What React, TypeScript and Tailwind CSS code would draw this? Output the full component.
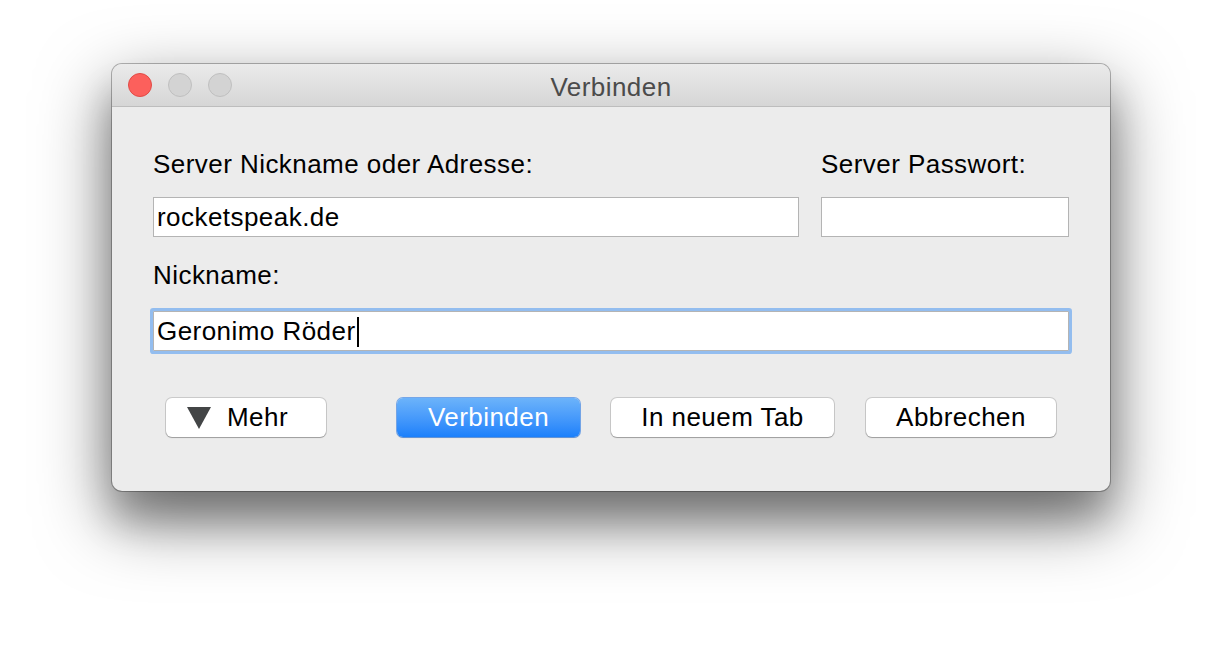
import React from 'react';

function TrafficLight({ color }: { color: 'red' | 'gray' }) {
  return (
    <div
      className={
        color === 'red'
          ? 'w-[24px] h-[24px] rounded-full bg-[#fc605c] border border-[#e04b46]'
          : 'w-[24px] h-[24px] rounded-full bg-[#d3d3d3] border border-[#bfbfbf]'
      }
    />
  );
}

function PlainButton({ children, className }: { children: React.ReactNode; className: string }) {
  return (
    <button
      className={`h-[39px] flex items-center justify-center pb-[2px] rounded-[6px] bg-white text-black leading-[32px] shadow-[0_0_0_1px_rgba(0,0,0,0.14),0_1px_1px_rgba(0,0,0,0.22)] ${className}`}
    >
      {children}
    </button>
  );
}

export default function App() {
  return (
    <div
      className="w-[1222px] h-[652px] bg-white overflow-hidden pt-[64px] pl-[112px] text-[26px] tracking-[0.45px]"
      style={{ fontFamily: '"Liberation Sans", Arial, sans-serif' }}
    >
      {/* Window */}
      <div className="w-[998px] h-[427px] rounded-[10px] bg-[#ececec] flex flex-col overflow-hidden shadow-[0_0_0_1px_rgba(0,0,0,0.28),0_26px_70px_2px_rgba(0,0,0,0.5),0_30px_36px_rgba(0,0,0,0.22)]">
        {/* Title bar */}
        <div className="relative h-[43px] flex items-center bg-gradient-to-b from-[#ebebeb] to-[#d6d6d6] border-b border-[#bdbdbd]">
          <div className="flex items-center gap-[16px] pl-[16px]">
            <TrafficLight color="red" />
            <TrafficLight color="gray" />
            <TrafficLight color="gray" />
          </div>
          <div className="absolute inset-0 flex items-center justify-center leading-[32px] text-[#4b4b4b] pt-[3px]">
            Verbinden
          </div>
        </div>

        {/* Content */}
        <div className="flex flex-col px-[41px] pt-[41px]">
          <div className="flex gap-[22px]">
            <div className="w-[646px] flex flex-col">
              <div className="leading-[32px] text-black">Server Nickname oder Adresse:</div>
              <div className="mt-[17px] h-[40px] bg-white border border-[#b4b4b4] pl-[3px] pt-[3px] leading-[32px] text-black">
                rocketspeak.de
              </div>
            </div>
            <div className="w-[248px] flex flex-col">
              <div className="leading-[32px] text-black">Server Passwort:</div>
              <div className="mt-[17px] h-[40px] bg-white border border-[#b4b4b4]" />
            </div>
          </div>

          <div className="mt-[22px] leading-[32px] text-black">Nickname:</div>
          <div className="mt-[20px] h-[40px] bg-white border border-[#b4b4b4] pl-[3px] pt-[3px] leading-[32px] text-black flex items-start rounded-[1px] shadow-[0_0_0_3px_#93bdef]">
            <span>Geronimo Röder</span>
            <span className="w-[2px] h-[30px] bg-black mt-[2px] ml-[1px]" />
          </div>

          {/* Buttons */}
          <div className="mt-[47px] flex pl-[13px]">
            <PlainButton className="w-[160px] justify-start pl-[21px] gap-[16px]">
              <svg width="24" height="22" viewBox="0 0 24 22" className="mt-[2px]">
                <path d="M0 0 H24 L12 22 Z" fill="#434546" />
              </svg>
              <span>Mehr</span>
            </PlainButton>
            <button className="ml-[71px] w-[183px] h-[39px] pb-[2px] rounded-[6px] bg-gradient-to-b from-[#6cb3fa] to-[#1a80fb] text-white leading-[32px] flex items-center justify-center shadow-[0_0_0_1px_rgba(20,110,230,0.55),0_1px_1px_rgba(0,0,0,0.2)]">
              Verbinden
            </button>
            <PlainButton className="ml-[31px] w-[223px]">In neuem Tab</PlainButton>
            <PlainButton className="ml-[32px] w-[190px]">Abbrechen</PlainButton>
          </div>
        </div>
      </div>
    </div>
  );
}
